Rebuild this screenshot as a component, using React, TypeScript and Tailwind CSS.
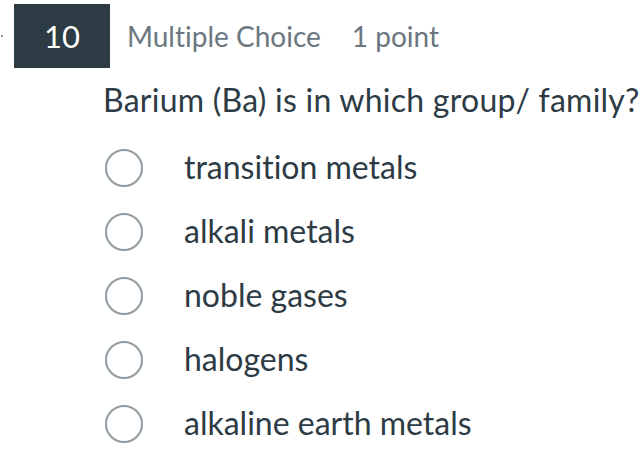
import React from "react";

const options = [
  "transition metals",
  "alkali metals",
  "noble gases",
  "halogens",
  "alkaline earth metals",
];

export default function App() {
  return (
    <div className="h-[461px] w-[644px] overflow-hidden bg-white font-['Lato',sans-serif] [font-variant-ligatures:none]">
      <div className="flex items-center pt-1">
        <span className="ml-[1px] mr-[11px] h-[2px] w-[2px] rounded-full bg-gray-500" />
        <div className="flex h-16 w-24 items-center justify-center bg-[#2d3b45] text-[31px] text-white">
          10
        </div>
        <span className="ml-[17px] text-[28px] text-[#6b7780]">Multiple Choice</span>
        <span className="ml-[31px] text-[28px] text-[#6b7780]">1 point</span>
      </div>

      <div className="pl-[103px]">
        <p className="mt-[12px] whitespace-nowrap text-[32px] leading-[40px] tracking-[0.25px] text-[#2d3b45]">
          Barium (Ba) is in which group/ family?
        </p>

        <ul className="mt-[29px] flex flex-col gap-[26px]">
          {options.map((option) => (
            <li key={option} className="flex h-[38px] items-center">
              <span className="ml-[2px] h-[38px] w-[38px] shrink-0 rounded-full border-2 border-[#8f9aa1]" />
              <span className="ml-[41px] pb-[2px] whitespace-nowrap text-[32px] leading-[38px] text-[#2d3b45]">
                {option}
              </span>
            </li>
          ))}
        </ul>
      </div>
    </div>
  );
}
